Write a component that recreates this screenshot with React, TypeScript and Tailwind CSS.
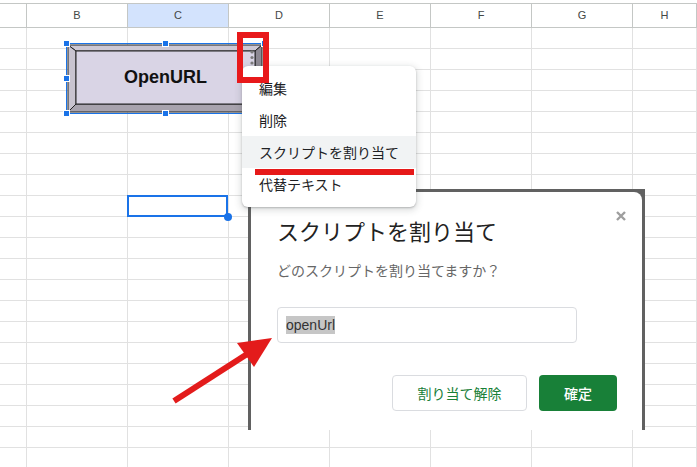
import type React from 'react'

const columns = ['', 'B', 'C', 'D', 'E', 'F', 'G', 'H']
const rows = Array.from({ length: 21 }, (_, i) => i)

const jp = { fontFamily: '"Noto Sans CJK JP", "Liberation Sans", sans-serif' }

function SheetGrid() {
  return (
    <div className="pt-[3px]">
      <div className="grid h-[25px] grid-cols-[27px_repeat(6,101px)_1fr] border-y border-[#c4c7c5]">
        {columns.map(col => (
          <div
            key={col || 'A'}
            className={`flex items-center justify-center border-r border-[#c4c7c5] text-[11px] text-[#444746] ${
              col === 'C' ? 'bg-[#d3e3fd]' : 'bg-white'
            }`}
            style={{ fontFamily: '"Liberation Sans", Arial, sans-serif' }}
          >
            {col}
          </div>
        ))}
      </div>
      {rows.map(r => (
        <div key={r} className="grid h-[21px] grid-cols-[27px_repeat(6,101px)_1fr]">
          {columns.map(col => (
            <div key={`${r}-${col}`} className="border-r border-b border-[#e1e1e1]" />
          ))}
        </div>
      ))}
    </div>
  )
}

function Handle({ className }: { className: string }) {
  return <div className={`absolute h-[7px] w-[7px] border border-white bg-[#1a73e8] ${className}`} />
}

function DrawingButton() {
  return (
    <div className="absolute left-[66px] top-[43px] h-[71px] w-[199px]">
      <svg className="absolute inset-0" width="199" height="71" viewBox="0 0 199 71">
        <polygon points="2,2 196,2 189,8 10,8" fill="#cdc8d4" stroke="#222" strokeWidth="1" />
        <polygon points="2,2 10,8 10,61 2,69" fill="#c9c4d0" stroke="#222" strokeWidth="1" />
        <polygon points="2,69 10,61 189,61 196,69" fill="#a8a3ae" stroke="#222" strokeWidth="1" />
        <polygon points="196,2 189,8 189,61 196,69" fill="#8d8993" stroke="#222" strokeWidth="1" />
        <rect x="10" y="8" width="179" height="53" fill="#d9d4e5" stroke="#222" strokeWidth="1" />
        <circle cx="186" cy="9" r="1.6" fill="#7a7a7a" />
        <circle cx="186" cy="14.5" r="1.6" fill="#7a7a7a" />
        <circle cx="186" cy="20" r="1.6" fill="#7a7a7a" />
      </svg>
      <div
        className="absolute left-[10px] top-[8px] flex h-[53px] w-[179px] items-center justify-center text-[18px] font-bold text-[#111]"
        style={{ fontFamily: '"Liberation Sans", Arial, sans-serif' }}
      >
        OpenURL
      </div>
      <div className="absolute inset-0 border border-[#1a73e8]" />
      <Handle className="left-[-3px] top-[-3px]" />
      <Handle className="left-[96px] top-[-3px]" />
      <Handle className="left-[195px] top-[-3px]" />
      <Handle className="left-[-3px] top-[32px]" />
      <Handle className="left-[-3px] top-[67px]" />
      <Handle className="left-[96px] top-[67px]" />
    </div>
  )
}

function ContextMenu() {
  const items = ['編集', '削除', 'スクリプトを割り当て', '代替テキスト']
  return (
    <div
      className="absolute left-[242px] top-[66px] h-[141px] w-[174px] rounded-md bg-white py-[6px] shadow-[0_2px_6px_2px_rgba(60,64,67,0.15),0_1px_2px_rgba(60,64,67,0.3)]"
      style={jp}
    >
      {items.map((label, i) => (
        <div
          key={label}
          className={`flex h-8 items-center pl-[17px] text-[14px] leading-none text-[#202124] ${
            i === 2 ? 'bg-[#f1f3f4]' : ''
          }`}
        >
          {label}
        </div>
      ))}
    </div>
  )
}

function AssignDialog() {
  return (
    <div className="absolute left-[248px] top-[189px] h-[241px] w-[397px] bg-[#616161] px-[3px] pt-[3px]" style={jp}>
      <div className="relative h-full rounded-tr-[8px] bg-white pl-[26px] pr-[25px] pt-[24px]">
        <svg className="absolute left-[365px] top-[19px]" width="10" height="10" viewBox="0 0 10 10">
          <path d="M1 1L9 9M9 1L1 9" stroke="#9e9e9e" strokeWidth="2.4" />
        </svg>
        <h2 className="text-[22px] leading-[28px] font-normal text-[#222]">スクリプトを割り当て</h2>
        <p className="mt-[16px] text-[14px] leading-[20px] text-[#666]">どのスクリプトを割り当てますか？</p>
        <div className="mt-[27px] flex h-[36px] w-[300px] items-center rounded-[4px] border border-[#dadce0] pl-[8px]">
          <span
            className="bg-[#c6c6c6] text-[14px] leading-[18px] text-[#333]"
            style={{ fontFamily: '"Liberation Sans", Arial, sans-serif' }}
          >
            openUrl
          </span>
        </div>
        <div className="mt-[32px] flex justify-end gap-[12px]">
          <button className="h-[36px] w-[135px] rounded-[4px] border border-[#dadce0] bg-white text-[14px] text-[#188038]">
            割り当て解除
          </button>
          <button className="h-[36px] w-[78px] rounded-[4px] bg-[#188038] text-[14px] font-medium text-white">
            確定
          </button>
        </div>
      </div>
    </div>
  )
}

export default function App() {
  const marks: React.ReactNode = (
    <svg className="pointer-events-none absolute inset-0" width="697" height="467" viewBox="0 0 697 467">
      <line x1="174" y1="401" x2="248" y2="353.5" stroke="#e31b1b" strokeWidth="6" />
      <polygon points="272,338 237,343 254,367" fill="#e31b1b" />
    </svg>
  )

  return (
    <div className="relative h-[467px] w-[697px] overflow-hidden bg-white">
      <SheetGrid />

      <div className="absolute left-[127px] top-[195px] h-[22px] w-[101px] border-2 border-[#1a73e8]" />
      <div className="absolute left-[224px] top-[213px] h-[8px] w-[8px] rounded-full bg-[#1a73e8]" />

      <DrawingButton />
      <AssignDialog />
      <ContextMenu />

      <div className="absolute left-[237px] top-[32px] h-[51px] w-[32px] border-[6px] border-[#e8191b]" />
      <div className="absolute left-[255px] top-[169px] h-[6px] w-[159px] bg-[#e61919]" />
      {marks}
    </div>
  )
}
